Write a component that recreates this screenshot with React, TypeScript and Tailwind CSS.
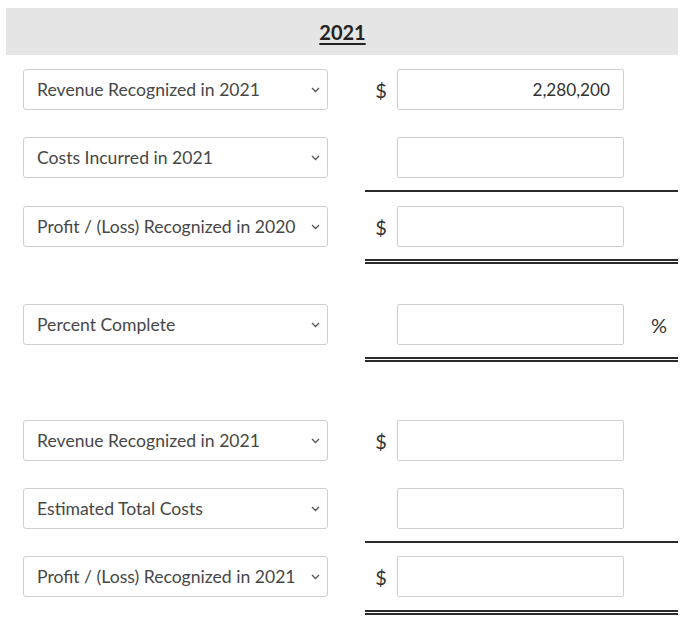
import React from "react";

const font = { fontFamily: "Lato, 'Open Sans', sans-serif" };

function Chevron() {
  return (
    <svg width="9" height="6" viewBox="0 0 9 6" className="shrink-0">
      <path d="M1 1 L4.5 4.5 L8 1" fill="none" stroke="#555" strokeWidth="1.3" />
    </svg>
  );
}

function Row({
  label,
  dollar,
  value,
  suffix,
  className,
}: {
  label: string;
  dollar?: boolean;
  value?: string;
  suffix?: string;
  className: string;
}) {
  return (
    <div className={"flex items-center h-[41px] " + className}>
      <div className="ml-[23px] w-[305px] h-[41px] border border-[#cfcfcf] rounded-[3px] flex items-center justify-between pl-[13px] pr-[7px] bg-white">
        <span className="text-[17.6px] text-[#474747] whitespace-nowrap pt-[2px]">{label}</span>
        <Chevron />
      </div>
      <div className="ml-[37px] w-[32px] flex justify-center text-[20px] text-[#333]">
        {dollar ? "$" : ""}
      </div>
      <div className="w-[227px] h-[41px] border border-[#cfcfcf] rounded-[2px] flex items-center justify-end pr-[13px] text-[17.2px] text-[#333] bg-white">
        {value}
      </div>
      <div className="w-[54px] flex justify-end pr-[11px] text-[20px] text-[#333]">{suffix}</div>
    </div>
  );
}

function Single({ className }: { className: string }) {
  return <div className={"ml-[365px] w-[313px] h-[2px] bg-[#2a2a2a] " + className} />;
}

function Double({ className }: { className: string }) {
  return (
    <div className={"ml-[365px] w-[313px] " + className}>
      <div className="h-[2px] bg-[#2a2a2a]" />
      <div className="h-[1px]" />
      <div className="h-[2px] bg-[#2a2a2a]" />
    </div>
  );
}

export default function App() {
  return (
    <div className="w-[700px] h-[628px] bg-white flex flex-col" style={font}>
      <div className="mx-[6px] mt-[8px] w-[672px] h-[47px] bg-[#e5e5e5] flex items-center justify-center">
        <span className="text-[20px] font-bold underline underline-offset-[3px] text-[#222] ml-[1px]">2021</span>
      </div>
      <Row className="mt-[14px]" label="Revenue Recognized in 2021" dollar value="2,280,200" />
      <Row className="mt-[27px]" label="Costs Incurred in 2021" />
      <Single className="mt-[12px]" />
      <Row className="mt-[14px]" label="Profit / (Loss) Recognized in 2020" dollar />
      <Double className="mt-[12px]" />
      <Row className="mt-[40px]" label="Percent Complete" suffix="%" />
      <Double className="mt-[12px]" />
      <Row className="mt-[58px]" label="Revenue Recognized in 2021" dollar />
      <Row className="mt-[27px]" label="Estimated Total Costs" />
      <Single className="mt-[12px]" />
      <Row className="mt-[13px]" label="Profit / (Loss) Recognized in 2021" dollar />
      <Double className="mt-[13px]" />
    </div>
  );
}
